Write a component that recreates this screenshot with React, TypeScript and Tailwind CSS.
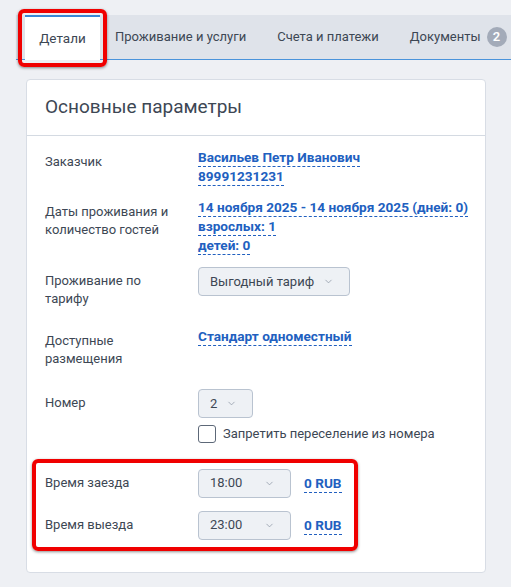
import { ChevronDown } from 'lucide-react';

function Select({ value, width }: { value: string; width?: string }) {
  return (
    <div
      className={`h-[29px] flex items-center justify-between gap-[9px] pl-[11px] pr-[15px] bg-[#eef1f5] border border-[#b9c3d0] rounded-[4px] text-[13px] text-[#3d4754] ${width ?? ''}`}
    >
      <span>{value}</span>
      <ChevronDown className="w-[11px] h-[11px] text-[#8a94a3]" strokeWidth={1.6} />
    </div>
  );
}

function Link({ children }: { children: React.ReactNode }) {
  return (
    <span className="self-start font-bold text-[13.6px] text-[#2160c0] leading-[18px] border-b border-dashed border-[#2160c0] whitespace-nowrap">
      {children}
    </span>
  );
}

function Row({ label, children, className }: { label: React.ReactNode; children: React.ReactNode; className?: string }) {
  return (
    <div className={`flex ${className ?? ''}`}>
      <div className="w-[153px] shrink-0 pt-[5px] pb-[7px] pr-3 leading-[18px] text-[13px] text-[#3d4754]">{label}</div>
      <div className="flex flex-col items-start">{children}</div>
    </div>
  );
}

export default function App() {
  return (
    <div className="min-h-[587px] bg-[#eef0f4] pt-[15px] font-['Roboto',sans-serif]">
      {/* Tabs */}
      <div className="ml-[16px] h-[45px] flex items-stretch bg-[#dfe3ea] border-b border-[#4a93db] pl-[9px] whitespace-nowrap text-[13px] text-[#3d4754]">
        <div className="relative shrink-0 -mb-px bg-white border-t-2 border-[#3a86d4] w-[75px] flex items-center justify-center text-[13.5px]">
          Детали
          <span className="absolute -left-[7px] -right-[7px] -top-[8px] -bottom-[7px] border-4 border-[#f00000] rounded-[6px] shadow-[0_1px_3px_rgba(0,0,0,0.45)]" />
        </div>
        <div className="shrink-0 pl-[15px] pr-[16px] flex items-center">Проживание и услуги</div>
        <div className="shrink-0 px-[15px] flex items-center">Счета и платежи</div>
        <div className="shrink-0 pl-[16px] flex items-center gap-[6px]">
          Документы
          <span className="w-[20px] h-[20px] rounded-full bg-[#a3abb9] text-white text-[13px] font-semibold flex items-center justify-center">
            2
          </span>
        </div>
      </div>

      {/* Card */}
      <div className="ml-[26px] mt-[19px] w-[460px] h-[494px] bg-white border border-[#d8dde5] rounded-[4px]">
        <div className="h-[56px] flex items-center px-[18px] border-b border-[#d4dae2] text-[19px] text-[#3d4754]">
          Основные параметры
        </div>

        <div className="px-[18px] pt-[12px] flex flex-col gap-[12px]">
          <Row label="Заказчик">
            <Link>Васильев Петр Иванович</Link>
            <Link>89991231231</Link>
          </Row>
          <Row label={<>Даты проживания и<br />количество гостей</>}>
            <Link>14 ноября 2025 - 14 ноября 2025 (дней: 0)</Link>
            <Link>взрослых: 1</Link>
            <Link>детей: 0</Link>
          </Row>
          <Row label={<>Проживание по<br />тарифу</>}>
            <Select value="Выгодный тариф" />
          </Row>
          <Row label={<>Доступные<br />размещения</>}>
            <Link>Стандарт одноместный</Link>
          </Row>
          <Row label="Номер" className="mt-[2px]">
            <Select value="2" />
            <label className="mt-[6px] flex items-center gap-[7px] text-[13px] text-[#3d4754]">
              <span className="w-[18px] h-[18px] border border-[#5d6878] rounded-[3px] bg-white" />
              Запретить переселение из номера
            </label>
          </Row>

          {/* Time rows (highlighted) */}
          <div className="relative mt-[13px] flex flex-col gap-[13px]">
            <span className="absolute -left-[13px] w-[326px] -top-[10px] -bottom-[11px] border-4 border-[#f00000] rounded-[6px] shadow-[0_1px_3px_rgba(0,0,0,0.45)]" />
            {[
              ['Время заезда', '18:00'],
              ['Время выезда', '23:00'],
            ].map(([label, time]) => (
              <div key={label} className="flex items-center">
                <div className="w-[153px] shrink-0 text-[13px] text-[#3d4754]">{label}</div>
                <Select value={time} width="w-[93px]" />
                <span className="ml-[13px] font-bold text-[13.6px] text-[#2160c0] leading-[18px] border-b border-dashed border-[#2160c0]">
                  0 RUB
                </span>
              </div>
            ))}
          </div>
        </div>
      </div>
    </div>
  );
}
